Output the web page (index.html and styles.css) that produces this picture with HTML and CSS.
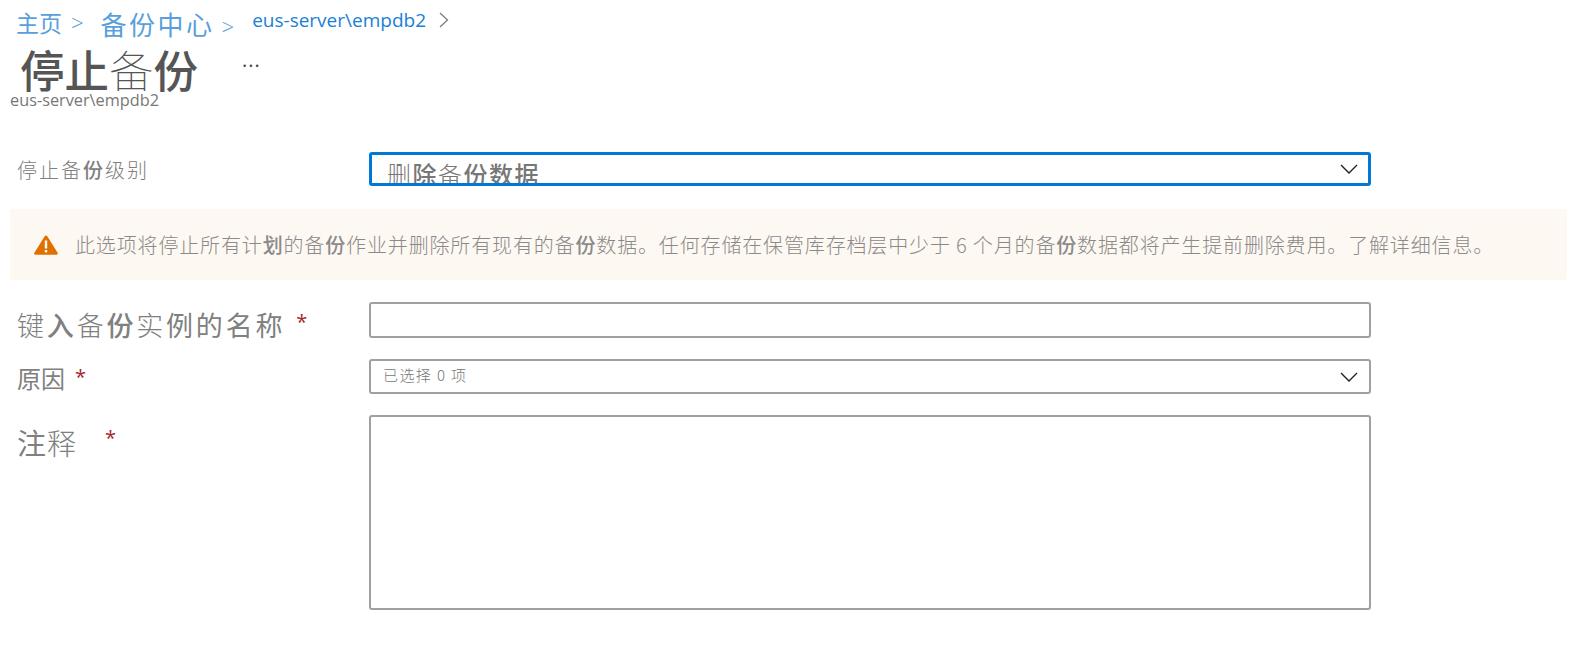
FILE: index.html
```html
<!DOCTYPE html>
<html lang="zh-CN">

<head>
    <meta charset="UTF-8">
    <link rel="stylesheet" href="styles.css">
    <title>停止备份</title>
</head>

<body>
    <nav class="crumbs">
        <a class="crumb crumb-home">主页</a>
        <span class="sep sep-home">&gt;</span>
        <a class="crumb crumb-center">备份中心</a>
        <span class="sep sep-center">&gt;</span>
        <a class="crumb crumb-item">eus-server\empdb2</a>
        <svg class="crumb-chevron" width="10" height="16" viewBox="0 0 10 16"><path d="M1 1l7.500 7-7.500 7" fill="none" stroke="#777" stroke-width="1.200"/></svg>
    </nav>

    <div class="title-row">
        <h1>停止<span class="thin">备</span>份</h1>
        <span class="more">...</span>
    </div>
    <div class="subtitle">eus-server\empdb2</div>

    <div class="row row-level">
        <label class="label label-level">停止备<b>份</b>级别</label>
        <div class="select select-focus">
            <span class="select-value">删<b>除</b>备<b>份数据</b></span>
            <svg class="chevron" width="18" height="10" viewBox="0 0 18 10"><path d="M1 1l8 8 8-8" fill="none" stroke="#222" stroke-width="1.400"/></svg>
        </div>
    </div>

    <div class="banner">
        <svg class="warn" width="24" height="20" viewBox="0 0 24 20">
            <path d="M12 0.500c.6 0 1 .3 1.300.8l10.300 16.500c.6 1 0 2-1.100 2H1.500c-1.100 0-1.700-1-1.100-2L10.700 1.300c.3-.5.700-.8 1.300-.8z" fill="#e07000"/>
            <rect x="10.800" y="5.500" width="2.400" height="8" fill="#fff"/>
            <rect x="10.800" y="15" width="2.400" height="2.400" fill="#fff"/>
        </svg>
        <p>此选项将停止所有计<b>划</b>的备<b>份</b>作业并删除所有现有的备<b>份</b>数据。任何存储在保管库存档层中少于 6 个月的备<b>份</b>数据都将产生提前删除费用。了解详细信息。</p>
    </div>

    <div class="row row-name">
        <label class="label label-name">键<b>入</b>备<b>份</b>实<span class="mid">例的名称</span><span class="req req-name">*</span></label>
        <div class="field field-name"></div>
    </div>

    <div class="row row-reason">
        <label class="label label-reason"><span class="mid">原因</span><span class="req req-reason">*</span></label>
        <div class="select select-small">
            <span class="select-small-value">已选择 0 项</span>
            <svg class="chevron" width="18" height="10" viewBox="0 0 18 10"><path d="M1 1l8 8 8-8" fill="none" stroke="#222" stroke-width="1.400"/></svg>
        </div>
    </div>

    <div class="row row-notes">
        <label class="label label-notes"><span class="mid">注</span>释<span class="req req-notes">*</span></label>
        <div class="field field-notes"></div>
    </div>
</body>

</html>
```

FILE: styles.css
```css
body {
    margin: 0;
    background-color: #fff;
    color: #777;
    font-family: "Noto Sans CJK SC", "Open Sans", sans-serif;
    font-weight: 300;
    overflow: hidden;
}

b {
    font-weight: 500;
}

.mid {
    font-weight: 400;
}

.crumbs {
    display: flex;
    align-items: center;
    height: 46px;
    padding-left: 16px;
    color: #5a9fdc;
}

.crumb-home {
    font-size: 23px;
    font-weight: 400;
    margin-top: -3px;
}

.crumb-center {
    font-size: 26px;
    font-weight: 400;
    letter-spacing: 2.500px;
    margin-top: 0;
}

.crumb-item {
    font-family: "Open Sans", sans-serif;
    font-weight: 400;
    font-size: 19px;
    color: #1a7fd6;
    margin-left: 18px;
    margin-top: -6px;
}

.crumb-chevron {
    margin-left: 13px;
    margin-top: -6px;
}

.sep {
    font-family: "Open Sans", sans-serif;
    font-size: 22px;
}

.sep-home {
    margin-left: 9px;
    margin-right: 17px;
    margin-top: -2px;
}

.sep-center {
    margin-left: 7px;
    margin-top: 6px;
}

.title-row {
    display: flex;
    align-items: center;
    height: 45px;
    padding-left: 20px;
}

h1 {
    margin: -1px 0 0;
    font-size: 44.500px;
    font-weight: 500;
    color: #555;
    line-height: 45px;
}

.thin {
    font-weight: 100;
}

.more {
    margin-left: 44px;
    margin-top: -18px;
    font-family: "Open Sans", sans-serif;
    font-size: 20px;
    font-weight: 400;
    letter-spacing: 1px;
    color: #444;
}

.subtitle {
    padding-left: 10px;
    font-family: "Open Sans", sans-serif;
    font-weight: 400;
    font-size: 16.300px;
    line-height: 18px;
    color: #777;
}

.row {
    display: flex;
    padding-left: 17px;
    width: 1354px;
}

.label {
    width: 352px;
    flex-shrink: 0;
    color: #808080;
}

.label b {
    font-weight: 500;
}

.req {
    color: #a4262c;
    font-family: "Open Sans", sans-serif;
    font-weight: 400;
}

.row-level {
    margin-top: 43px;
    align-items: center;
}

.label-level {
    font-size: 20px;
    letter-spacing: 2px;
}

.select {
    flex: 1;
    display: flex;
    align-items: center;
    justify-content: space-between;
    box-sizing: border-box;
    background-color: #fff;
}

.select-focus {
    height: 34px;
    border: 3px solid #0078d4;
    border-radius: 3px;
    padding: 0 10px 0 15px;
    overflow: hidden;
}

.select-value {
    font-size: 24px;
    letter-spacing: 1.500px;
    line-height: 34px;
    margin-top: 9px;
    color: #777;
}

.banner {
    display: flex;
    align-items: center;
    height: 71px;
    margin: 23px 8px 0 10px;
    padding-left: 24px;
    background-color: #fef8f2;
    border-radius: 2px;
}

.banner p {
    margin: 0 0 0 17px;
    font-size: 20px;
    letter-spacing: .850px;
    color: #8a8a8a;
    white-space: nowrap;
}

.row-name {
    margin-top: 22px;
}

.label-name {
    height: 36px;
    font-size: 27px;
    line-height: 40px;
    letter-spacing: 2.800px;
}

.req-name {
    font-size: 20px;
    margin-left: 11px;
    vertical-align: 7px;
}

.field {
    flex: 1;
    box-sizing: border-box;
    border: 2px solid #a0a0a0;
    border-radius: 3px;
}

.field-name {
    height: 36px;
}

.row-reason {
    margin-top: 21px;
}

.label-reason {
    height: 35px;
    font-size: 24px;
    line-height: 36px;
}

.req-reason {
    font-size: 20px;
    margin-left: 10px;
    vertical-align: 4px;
}

.select-small {
    height: 35px;
    border: 2px solid #a0a0a0;
    border-radius: 3px;
    padding: 0 11px 0 12px;
}

.select-small-value {
    font-size: 15px;
    letter-spacing: 1.400px;
    margin-top: -5px;
}

.row-notes {
    margin-top: 21px;
}

.label-notes {
    font-size: 29px;
    line-height: 46px;
    letter-spacing: 1px;
}

.req-notes {
    font-size: 20px;
    margin-left: 28px;
    vertical-align: 10px;
}

.field-notes {
    height: 195px;
}
```
